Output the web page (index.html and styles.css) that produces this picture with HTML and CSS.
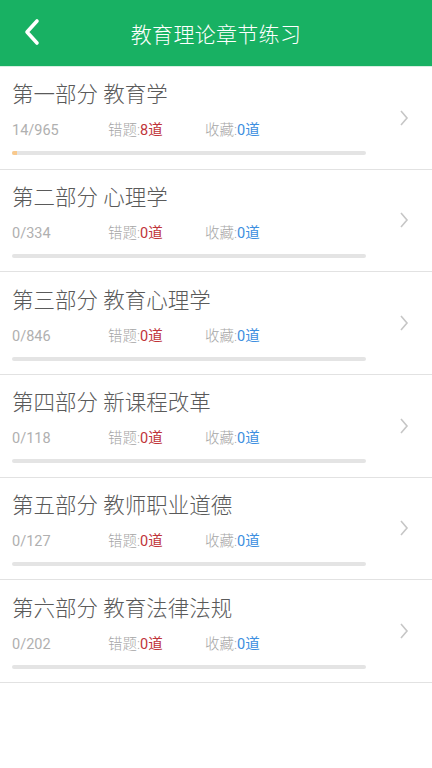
FILE: index.html
```html
<!DOCTYPE html>
<html lang="zh-CN">
<head>
    <meta charset="UTF-8">
    <meta name="viewport" content="width=device-width, initial-scale=1.0">
    <title>教育理论章节练习</title>
    <link rel="stylesheet" href="styles.css">
</head>
<body>
    <div class="header">
        <a class="back" href="#">
            <svg width="20" height="28" viewBox="0 0 20 28"><path d="M15 3 L5 14 L15 25" fill="none" stroke="#fff" stroke-width="3.6" stroke-linecap="round" stroke-linejoin="round"/></svg>
        </a>
        <h1 class="title">教育理论章节练习</h1>
    </div>

    <div class="list">
        <div class="row">
            <div class="info">
                <div class="name">第一部分 教育学</div>
                <div class="stats">
                    <span class="count">14/965</span>
                    <span class="stat">错题:<em class="wrong">8道</em></span>
                    <span class="stat">收藏:<em class="fav">0道</em></span>
                </div>
                <div class="bar"><div class="fill" style="width: 1.45%"></div></div>
            </div>
            <svg class="arrow" width="10" height="18" viewBox="0 0 10 18"><path d="M2 2 L8 9 L2 16" fill="none" stroke="#c6c6c6" stroke-width="1.6"/></svg>
        </div>
        <div class="row">
            <div class="info">
                <div class="name">第二部分 心理学</div>
                <div class="stats">
                    <span class="count">0/334</span>
                    <span class="stat">错题:<em class="wrong">0道</em></span>
                    <span class="stat">收藏:<em class="fav">0道</em></span>
                </div>
                <div class="bar"></div>
            </div>
            <svg class="arrow" width="10" height="18" viewBox="0 0 10 18"><path d="M2 2 L8 9 L2 16" fill="none" stroke="#c6c6c6" stroke-width="1.6"/></svg>
        </div>
        <div class="row">
            <div class="info">
                <div class="name">第三部分 教育心理学</div>
                <div class="stats">
                    <span class="count">0/846</span>
                    <span class="stat">错题:<em class="wrong">0道</em></span>
                    <span class="stat">收藏:<em class="fav">0道</em></span>
                </div>
                <div class="bar"></div>
            </div>
            <svg class="arrow" width="10" height="18" viewBox="0 0 10 18"><path d="M2 2 L8 9 L2 16" fill="none" stroke="#c6c6c6" stroke-width="1.6"/></svg>
        </div>
        <div class="row">
            <div class="info">
                <div class="name">第四部分 新课程改革</div>
                <div class="stats">
                    <span class="count">0/118</span>
                    <span class="stat">错题:<em class="wrong">0道</em></span>
                    <span class="stat">收藏:<em class="fav">0道</em></span>
                </div>
                <div class="bar"></div>
            </div>
            <svg class="arrow" width="10" height="18" viewBox="0 0 10 18"><path d="M2 2 L8 9 L2 16" fill="none" stroke="#c6c6c6" stroke-width="1.6"/></svg>
        </div>
        <div class="row">
            <div class="info">
                <div class="name">第五部分 教师职业道德</div>
                <div class="stats">
                    <span class="count">0/127</span>
                    <span class="stat">错题:<em class="wrong">0道</em></span>
                    <span class="stat">收藏:<em class="fav">0道</em></span>
                </div>
                <div class="bar"></div>
            </div>
            <svg class="arrow" width="10" height="18" viewBox="0 0 10 18"><path d="M2 2 L8 9 L2 16" fill="none" stroke="#c6c6c6" stroke-width="1.6"/></svg>
        </div>
        <div class="row">
            <div class="info">
                <div class="name">第六部分 教育法律法规</div>
                <div class="stats">
                    <span class="count">0/202</span>
                    <span class="stat">错题:<em class="wrong">0道</em></span>
                    <span class="stat">收藏:<em class="fav">0道</em></span>
                </div>
                <div class="bar"></div>
            </div>
            <svg class="arrow" width="10" height="18" viewBox="0 0 10 18"><path d="M2 2 L8 9 L2 16" fill="none" stroke="#c6c6c6" stroke-width="1.6"/></svg>
        </div>
    </div>
</body>
</html>
```

FILE: styles.css
```css
body {
    font-family: Roboto, "Noto Sans CJK SC", sans-serif;
    margin: 0;
    background: #fff;
}
.header {
    position: relative;
    height: 66px;
    background: #18b163;
    display: flex;
    align-items: center;
    justify-content: center;
    border-bottom: 1px solid #d6f0e2;
}
.back {
    position: absolute;
    left: 22px;
    top: 18px;
    display: block;
}
.title {
    margin: 0;
    color: #fff;
    font-size: 21px;
    font-weight: 300;
    letter-spacing: 0.3px;
}
.row {
    box-sizing: border-box;
    height: 102.67px;
    display: flex;
    align-items: center;
    padding-left: 12px;
    border-bottom: 1px solid #e2e2e2;
}
.info {
    width: 354px;
}
.name {
    font-size: 21.5px;
    line-height: 30px;
    font-weight: 300;
    color: #5a5a5a;
}
.stats {
    display: flex;
    margin-top: 11px;
    font-size: 14.5px;
    line-height: 20px;
    font-weight: 300;
    color: #a6a6a6;
}
.count {
    width: 96px;
    font-weight: normal;
    color: #b0b0b0;
}
.stat {
    width: 97px;
}
.stat em {
    font-style: normal;
    font-weight: normal;
}
.wrong {
    color: #c0353a;
}
.fav {
    color: #3d8fe0;
}
.bar {
    margin-top: 10px;
    height: 4px;
    border-radius: 2px;
    background: #e4e4e4;
    overflow: hidden;
}
.fill {
    height: 100%;
    background: #f9c98c;
}
.arrow {
    margin-left: 33px;
}
```
